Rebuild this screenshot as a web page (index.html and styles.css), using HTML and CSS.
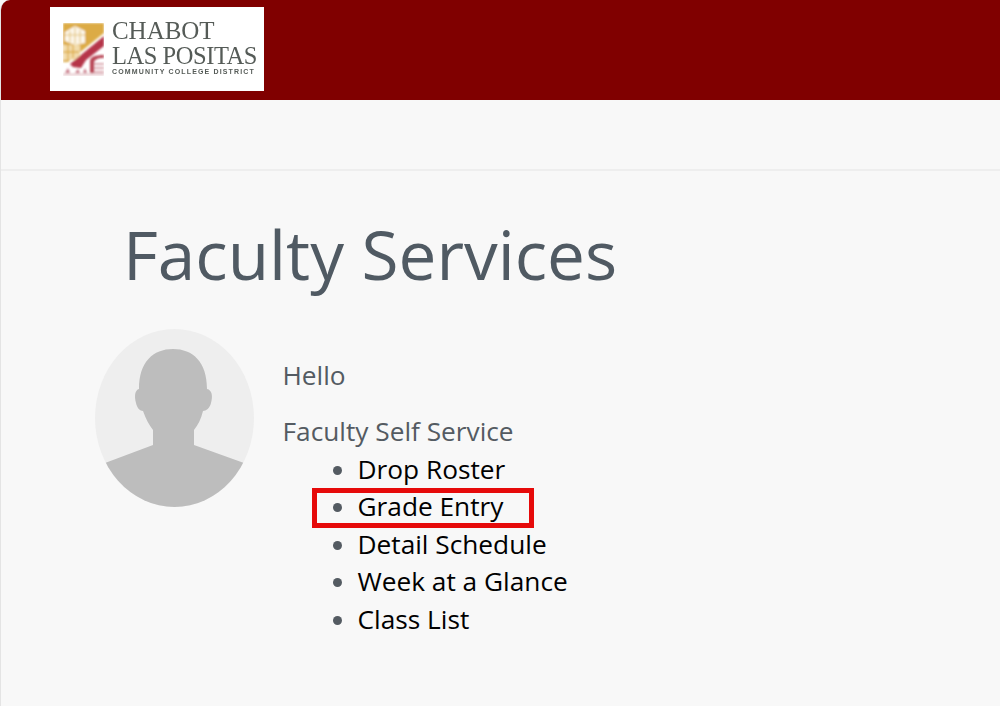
FILE: index.html
```html
<!DOCTYPE html>
<html lang="en">
<head>
<meta charset="utf-8">
<title>Faculty Services</title>
<link rel="stylesheet" href="styles.css">
</head>
<body>
<div class="page">
  <header class="header">
    <div class="logo">
      <svg class="logo-mark" viewBox="0 0 41 53" width="41" height="53" aria-hidden="true">
        <defs><filter id="soft" x="-10%" y="-10%" width="120%" height="120%"><feGaussianBlur stdDeviation="0.8"/></filter></defs>
        <g filter="url(#soft)">
          <path d="M0 0H41V10L5 39H0Z" fill="#dcab45"/>
          <path d="M2 9L12 3L22 8V20L12 22L2 18Z" fill="#fdf8ec"/>
          <path d="M12 4V21M7 8V19M17 7V20M2 12L22 12" stroke="#e2c07a" stroke-width="1.1" fill="none"/>
          <path d="M0 22H17V37H0Z" fill="#f2dcab"/>
          <path d="M5 22V38M10 22V35M0 29H16" stroke="#dcab45" stroke-width="1.3"/>
          <path d="M7 41L41 13V23L23 37L18 45L10 44Z" fill="#b5364a"/>
          <path d="M27 50V38C27 34 32 32 41 32V35C34 35 31 37 31 40V50Z" fill="#b84455"/>
          <path d="M31 41H41M31 45H41M31 49H41" stroke="#cf8d97" stroke-width="1.6"/>
          <path d="M2 50L5 45L7 50ZM12 50L15 46L17 50ZM20 50L22 45L24 50Z" fill="#c67583"/>
          <path d="M0 51.5H41" stroke="#dfb9be" stroke-width="1.4"/>
        </g>
      </svg>
      <div class="logo-text">
        <span class="logo-line logo-first">CHABOT</span>
        <span class="logo-line">LAS POSITAS</span>
        <span class="logo-small">COMMUNITY COLLEGE DISTRICT</span>
      </div>
    </div>
  </header>
  <nav class="navbar"></nav>
  <main class="content">
    <h1 class="title">Faculty Services</h1>
    <div class="profile">
      <svg class="avatar" viewBox="0 0 159 178" width="159" height="178" aria-hidden="true">
        <defs><clipPath id="oval"><ellipse cx="79.5" cy="89" rx="79.5" ry="89"/></clipPath></defs>
        <ellipse cx="79.5" cy="89" rx="79.5" ry="89" fill="#eeeeee"/>
        <g clip-path="url(#oval)">
          <path fill="#bdbdbd" d="M44 60C44 33 58 20 78 20C98 20 112 33 112 60C117 61 118 67 116 74C115 79 111 82 108 82C106 90 103 96 99 101V116L149 134V178H10V134L58 116V101C54 96 51 90 48 82C45 82 42 79 41 74C39 67 40 61 44 60Z"/>
        </g>
      </svg>
      <div class="details">
        <p class="hello">Hello</p>
        <p class="section">Faculty Self Service</p>
        <ul class="links">
          <li>Drop Roster</li>
          <li>Grade Entry</li>
          <li>Detail Schedule</li>
          <li>Week at a Glance</li>
          <li>Class List</li>
        </ul>
        <div class="highlight"></div>
      </div>
    </div>
  </main>
</div>
</body>
</html>
```
FILE: styles.css
```css
* { box-sizing: border-box; }
html, body { margin: 0; height: 100%; }
body {
  background: #f8f8f8;
  font-family: "Open Sans", sans-serif;
  color: #545b62;
  overflow: hidden;
}
.page {
  height: 706px;
  border-left: 1px solid #e4e4e4;
  border-top-left-radius: 10px;
  overflow: hidden;
}
.header {
  height: 100px;
  background: #800000;
  padding: 7px 0 0 49px;
}
.logo {
  width: 214px;
  height: 84px;
  background: #fff;
  display: flex;
  align-items: flex-start;
  gap: 8px;
  padding: 16px 0 0 13px;
}
.logo-mark { flex: none; }
.logo-text {
  display: flex;
  flex-direction: column;
  font-family: "Liberation Serif", serif;
  color: #555b57;
  margin-top: -5px;
  filter: blur(0.4px);
}
.logo-line {
  font-size: 24.5px;
  line-height: 25px;
  letter-spacing: -0.45px;
  white-space: nowrap;
}
.logo-first {
  font-size: 25px;
  letter-spacing: -0.05px;
}
.logo-small {
  font-family: "Liberation Sans", sans-serif;
  font-size: 7px;
  font-weight: 700;
  line-height: 10px;
  letter-spacing: 1.15px;
  white-space: nowrap;
  margin-top: -1px;
}
.navbar {
  height: 71px;
  border-bottom: 2px solid #eeeeee;
}
.content { padding: 0 0 0 94px; }
.title {
  margin: 0;
  padding: 39px 0 0 28px;
  font-size: 67.5px;
  font-weight: 400;
  line-height: 88px;
  color: #505a63;
  white-space: nowrap;
}
.profile {
  display: flex;
  margin-top: 31px;
}
.avatar { flex: none; display: block; }
.details {
  position: relative;
  margin-left: 28.5px;
  padding-top: 27px;
  font-size: 26.25px;
}
.hello, .section {
  margin: 0;
  line-height: 38px;
  color: #545b62;
}
.section { margin-top: 18px; }
.links {
  margin: 0.7px 0 0;
  padding: 0 0 0 75px;
  color: #000;
  line-height: 37.5px;
}
.links li::marker { color: #545b62; }
.highlight {
  position: absolute;
  left: 29.5px;
  top: 159px;
  width: 222px;
  height: 40px;
  border: 5px solid #e60a0a;
}
```
